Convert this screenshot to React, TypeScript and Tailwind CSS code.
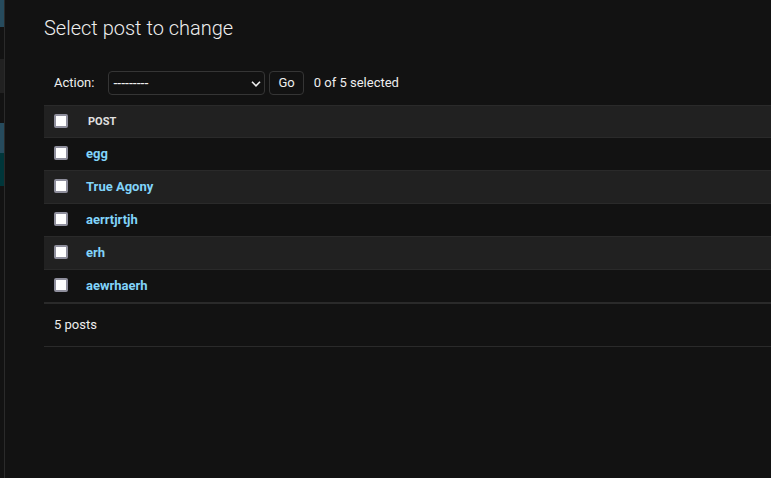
import { useEffect, useRef, useState } from 'react';

const posts = ['egg', 'True Agony', 'aerrtjrtjh', 'erh', 'aewrhaerh'];

const checkboxClass =
  'block size-[14px] appearance-none rounded-xs border-2 border-[#8f8f9d] bg-white checked:border-[#79aec8] checked:bg-[#264b5d]';

function Sidebar() {
  return (
    <aside className="w-[5px] shrink-0 border-r border-[#2a2a2a]">
      <div className="h-[27px] bg-[#264b5d]" />
      <div className="mt-8 h-[34px] bg-[#212121]" />
      <div className="mt-[30px] h-[30px] bg-[#264b5d]" />
      <div className="h-[33px] bg-[#00363a]" />
    </aside>
  );
}

export default function App() {
  const [selected, setSelected] = useState<string[]>([]);
  const all = useRef<HTMLInputElement>(null);

  useEffect(() => {
    if (all.current) {
      all.current.indeterminate = selected.length > 0 && selected.length < posts.length;
    }
  }, [selected]);

  const toggle = (post: string) =>
    setSelected((now) => (now.includes(post) ? now.filter((p) => p !== post) : [...now, post]));

  return (
    <div className="flex min-h-screen bg-[#121212] font-[Roboto,'Liberation_Sans',sans-serif] text-[13px] text-[#eeeeee]">
      <Sidebar />
      <main className="min-w-0 flex-1 pt-4 pl-[39px]">
        <h1 className="text-xl leading-6 font-light">Select post to change</h1>

        <form onSubmit={(e) => e.preventDefault()}>
          <div className="mt-[31px] flex h-6 items-center pl-[10px]">
            <label htmlFor="action" className="mr-[14px]">
              Action:
            </label>
            <div className="relative mr-1">
              <select
                id="action"
                className="block h-6 w-[157px] appearance-none rounded border border-[#353535] bg-[#121212] pl-1 text-sm leading-5"
              >
                <option>---------</option>
                <option>Delete selected posts</option>
              </select>
              <svg
                viewBox="0 0 10 6"
                className="pointer-events-none absolute top-[10px] right-1 h-[6px] w-[10px]"
                fill="none"
                stroke="#eeeeee"
                strokeWidth="1.6"
                aria-hidden="true"
              >
                <path d="M1 0.8 5 4.8 9 0.8" />
              </svg>
            </div>
            <button
              type="submit"
              className="h-6 rounded border border-[#353535] px-2 leading-5"
            >
              Go
            </button>
            <span className="ml-[10px]">
              {selected.length} of {posts.length} selected
            </span>
          </div>

          <table className="mt-[10px] w-full border-separate border-spacing-0 text-left">
            <thead>
              <tr className="bg-[#212121]">
                <th className="h-[33px] w-[34px] border-y border-[#2a2a2a] pb-[2px] pl-[10px]">
                  <input
                    ref={all}
                    type="checkbox"
                    aria-label="Select all posts"
                    className={checkboxClass}
                    checked={selected.length === posts.length}
                    onChange={(e) => setSelected(e.target.checked ? posts : [])}
                  />
                </th>
                <th className="border-y border-[#2a2a2a] pl-[10px] text-[11px] leading-4 font-bold text-[#e0e0e0] uppercase">
                  Post
                </th>
              </tr>
            </thead>
            <tbody>
              {posts.map((post) => (
                <tr key={post} className="even:bg-[#212121]">
                  <td className="h-[33px] border-b border-[#2a2a2a] pb-[2px] pl-[10px]">
                    <input
                      type="checkbox"
                      aria-label={`Select ${post}`}
                      className={checkboxClass}
                      checked={selected.includes(post)}
                      onChange={() => toggle(post)}
                    />
                  </td>
                  <th className="border-b border-[#2a2a2a] pl-2 leading-4 font-bold">
                    <a href="#post" className="text-[#81d4fa]">
                      {post}
                    </a>
                  </th>
                </tr>
              ))}
            </tbody>
          </table>

          <p className="border-y border-[#2a2a2a] py-3 pl-[10px] leading-[18px]">
            {posts.length} posts
          </p>
        </form>
      </main>
    </div>
  );
}
